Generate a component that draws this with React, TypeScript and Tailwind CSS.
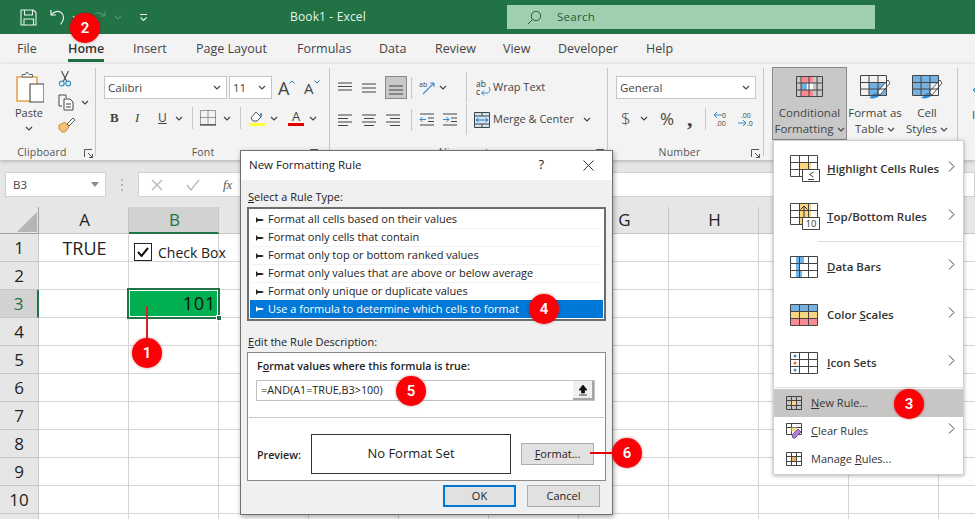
import React from "react";

const ui = "font-['Open_Sans','Noto_Sans',sans-serif]";

function Chev({ c = "#444", className = "" }: { c?: string; className?: string }) {
  return (
    <svg width="8" height="5" viewBox="0 0 8 5" className={className}>
      <path d="M1 1l3 3 3-3" fill="none" stroke={c} strokeWidth="1.2" />
    </svg>
  );
}

function Launcher() {
  return (
    <svg width="9" height="9" viewBox="0 0 9 9">
      <path d="M.5 8V.5H8M4 4l4.500 4.500M8.500 5v3.500H5" fill="none" stroke="#555" strokeWidth="1" />
    </svg>
  );
}

function Badge({ n, className }: { n: string; className: string }) {
  return (
    <div className={`absolute flex h-[30px] w-[30px] items-center justify-center rounded-full bg-[#fb0007] text-[15px] font-semibold text-white font-['Roboto',sans-serif] shadow-[0_0_3px_rgba(150,0,0,0.5)] ${className}`}>
      {n}
    </div>
  );
}

function RibbonSep({ className = "", tall = false }: { className?: string; tall?: boolean }) {
  return <div className={`${tall ? "h-[31px]" : "h-[22px]"} w-px bg-[#c8c8c8] ${className}`} />;
}

function GroupDivider() {
  return <div className="my-[4px] w-px shrink-0 bg-[#c6c6c6]" />;
}

function Lines({ ys, xs }: { ys: number[]; xs: [number, number][] }) {
  return (
    <svg width="16" height="16" viewBox="0 0 16 16">
      {ys.map((y, i) => (
        <path key={y} d={`M${xs[i][0]} ${y}H${xs[i][1]}`} stroke="#444" strokeWidth="1" />
      ))}
    </svg>
  );
}

function TitleBar() {
  return (
    <div className="flex h-[34px] items-center bg-[#217346] text-white">
      <div className="ml-[20px] flex w-[19px] items-center">
        <svg width="17" height="17" viewBox="0 0 17 17">
          <path d="M1 1h12.500L16 3.500V16H1zM4.500 1v5h8V1M4 16V10h9.500v6" fill="none" stroke="#e9f3ed" strokeWidth="1.1" />
        </svg>
      </div>
      <svg className="ml-[11px]" width="16" height="18" viewBox="0 0 16 18">
        <path d="M1 2v5h5M1.500 7C4 3.500 8 2.500 11 4.500c3.500 2.500 3.500 7-.5 12" fill="none" stroke="#e9f3ed" strokeWidth="1.2" />
      </svg>
      <Chev c="#d5e6dc" className="ml-[6px]" />
      <svg className="ml-[12px]" width="14" height="14" viewBox="0 0 14 14">
        <path d="M13 1v5H8M12.500 6C10 3 6 2 3 4" fill="none" stroke="#4f9470" strokeWidth="1.2" />
      </svg>
      <Chev c="#4f9470" className="ml-[8px]" />
      <svg className="ml-[17px]" width="9" height="9" viewBox="0 0 9 9">
        <path d="M1 1.500h7M1.500 4.500l3 3 3-3" fill="none" stroke="#e9f3ed" strokeWidth="1.1" />
      </svg>
      <div className={`ml-[142px] w-[219px] whitespace-nowrap text-[12px] tracking-[0.15px] text-[#e8f2ec] ${ui}`}>Book1  -  Excel</div>
      <div className="ml-[-2px] flex h-[24px] w-[368px] items-center bg-[#a0cfb0]">
        <svg className="ml-[20px]" width="15" height="15" viewBox="0 0 15 15">
          <circle cx="9" cy="6" r="4.700" fill="none" stroke="#1c5f3b" strokeWidth="1" />
          <path d="M5.500 9.500L1 14" stroke="#1c5f3b" strokeWidth="1" />
        </svg>
        <span className={`ml-[15px] text-[11.500px] tracking-[0.3px] text-[#1d5c3a] ${ui}`}>Search</span>
      </div>
    </div>
  );
}

const tabs: [string, string][] = [
  ["File", "w-[68px] pl-[17px]"],
  ["Home", "w-[65px]"],
  ["Insert", "w-[63px]"],
  ["Page Layout", "w-[101px]"],
  ["Formulas", "w-[82px]"],
  ["Data", "w-[56px]"],
  ["Review", "w-[68px]"],
  ["View", "w-[55px]"],
  ["Developer", "w-[88px]"],
  ["Help", "w-[50px]"],
];

function Tabs() {
  return (
    <div className={`flex h-[30px] items-center whitespace-nowrap bg-[#f3f3f3] text-[12.500px] text-[#444] ${ui}`}>
      {tabs.map(([t, c]) =>
        t === "Home" ? (
          <div key={t} className={`${c} flex h-full items-start`}>
            <span className="relative mt-[6px] font-semibold text-[#333]">
              {t}
              <span className="absolute bottom-[-3px] left-0 right-0 h-[3px] bg-[#1e6d43]" />
            </span>
          </div>
        ) : (
          <div key={t} className={c}>{t}</div>
        )
      )}
    </div>
  );
}

function GroupLabel({ text, w }: { text: string; w: string }) {
  return (
    <div className="mt-auto flex h-[14px] items-center">
      <div className={`${w} text-center text-[10.500px] tracking-[0.2px] text-[#555]`}>{text}</div>
      <Launcher />
    </div>
  );
}

function Clipboard() {
  return (
    <div className="flex h-full w-[95px] shrink-0 flex-col">
      <div className="flex">
        <div className="flex w-[58px] flex-col items-center pt-[7px]">
          <svg width="30" height="32" viewBox="0 0 30 32">
            <path d="M3 6h20v24H3z" fill="#fff" stroke="#e5a54c" strokeWidth="1.600" />
            <path d="M8 6V3.500h3.500L13 1l2 2.500h3.500V6z" fill="#fff" stroke="#666" strokeWidth="1" />
            <path d="M16 13h14v18H16z" fill="#fff" stroke="#444" strokeWidth="1.100" />
          </svg>
          <div className="mt-[3px] text-[11px] leading-[14px] text-[#444]">Paste</div>
          <Chev className="mt-[6px]" />
        </div>
        <div className="flex flex-col pt-[6px]">
          <svg width="14" height="17" viewBox="0 0 14 17">
            <path d="M3.500 1l5 10M10.500 1l-5 10" stroke="#444" strokeWidth="1.100" fill="none" />
            <circle cx="3.800" cy="13.500" r="2.400" fill="none" stroke="#3a8dc8" strokeWidth="1.200" />
            <circle cx="10.200" cy="13.500" r="2.400" fill="none" stroke="#3a8dc8" strokeWidth="1.200" />
          </svg>
          <div className="mt-[7px] flex items-center">
            <svg width="17" height="17" viewBox="0 0 17 17">
              <path d="M1 1h7v3M4 12H1V1M6 5h6l3 3v8H6zM8 10h5M8 13h5" fill="#fff" stroke="#444" strokeWidth="1" />
            </svg>
            <Chev className="ml-[6px]" />
          </div>
          <svg className="mt-[6px]" width="18" height="16" viewBox="0 0 18 16">
            <path d="M1 8l6-3 4 5-4 5H4L1 12z" fill="#f3c27a" stroke="#d98a2b" strokeWidth="1" />
            <path d="M9 7l6-6 2 2-6 6z" fill="#fff" stroke="#555" strokeWidth="1" />
          </svg>
        </div>
      </div>
      <GroupLabel text="Clipboard" w="w-[84px]" />
    </div>
  );
}

function Select({ text, w, pad = "pl-[5px]" }: { text: string; w: string; pad?: string }) {
  return (
    <div className={`flex h-[23px] shrink-0 items-center justify-between border border-[#c6c6c6] bg-white pr-[5px] ${pad} ${w}`}>
      <span className="text-[11.500px] text-[#444]">{text}</span>
      <Chev />
    </div>
  );
}

function FontGroup() {
  return (
    <div className="flex h-full w-[233px] shrink-0 flex-col pt-[12px]">
      <div className="flex items-center pl-[8px]">
        <Select text="Calibri" w="w-[123px]" pad="pl-[3px]" />
        <div className="w-[2px]" />
        <Select text="11" w="w-[43px]" pad="pl-[3px]" />
        <div className="ml-[6px] flex w-[26px] items-start text-[#444]">
          <span className="text-[18px] leading-[20px]">A</span>
          <svg className="mt-[2px]" width="6" height="4" viewBox="0 0 6 4"><path d="M.5 3.500L3 1l2.500 2.500" fill="none" stroke="#2a7ab8" /></svg>
        </div>
        <div className="flex w-[20px] items-start text-[#444]">
          <span className="text-[15px] leading-[20px]">A</span>
          <svg className="mt-[2px]" width="6" height="4" viewBox="0 0 6 4"><path d="M.5.500L3 3 5.500.5" fill="none" stroke="#2a7ab8" /></svg>
        </div>
      </div>
      <div className="mt-[7px] flex h-[24px] items-center text-[#444]">
        <span className="ml-[14px] w-[25px] font-['Liberation_Serif',serif] text-[13px] font-bold">B</span>
        <span className="w-[23px] font-['Liberation_Serif',serif] text-[13px] italic">I</span>
        <span className="w-[15px] text-[12px] underline">U</span>
        <Chev className="ml-[2px]" />
        <RibbonSep className="ml-[9px]" />
        <svg className="ml-[7px]" width="16" height="16" viewBox="0 0 16 16">
          <path d="M.5.500h15v14H.5z M.5 7.500h15 M8 .500v14" fill="none" stroke="#444" strokeDasharray="1 1" />
          <path d="M0 15h16" stroke="#222" strokeWidth="1" />
        </svg>
        <Chev className="ml-[7px]" />
        <RibbonSep className="ml-[9px]" />
        <svg className="ml-[7px]" width="17" height="17" viewBox="0 0 17 17">
          <path d="M3 8l5-6 5 5-4 4H5z" fill="#fff" stroke="#555" />
          <path d="M13 3v4" stroke="#2a7ab8" strokeWidth="1.500" />
          <path d="M1 13h16v3H1z" fill="#ffff33" />
        </svg>
        <Chev className="ml-[5px]" />
        <div className="ml-[10px] flex w-[16px] flex-col items-center">
          <span className="text-[13px] leading-[13px]">A</span>
          <span className="h-[3px] w-[16px] bg-[#e00000]" />
        </div>
        <Chev className="ml-[5px]" />
      </div>
      <GroupLabel text="Font" w="w-[214px]" />
    </div>
  );
}

function AlignGroup() {
  const l5: [number, number][] = [[1, 15], [1, 15], [1, 15]];
  return (
    <div className="flex h-full w-[277px] shrink-0 flex-col pt-[12px]">
      <div className="flex h-[23px] items-center pl-[7px]">
        <div className="w-[24px]"><Lines ys={[3, 6.500, 10]} xs={l5} /></div>
        <div className="w-[24px]"><Lines ys={[4, 8, 12]} xs={l5} /></div>
        <div className="flex h-[23px] w-[22px] items-center justify-center border border-[#8a8a8a] bg-[#c8c8c8]"><Lines ys={[6, 10, 14]} xs={l5} /></div>
        <RibbonSep className="ml-[4px]" />
        <svg className="ml-[7px]" width="17" height="16" viewBox="0 0 17 16">
          <path d="M4 14L15 3M15 3h-4M15 3v4" fill="none" stroke="#3a8dc8" strokeWidth="1.100" />
          <text x="0" y="7" fontSize="7" fill="#444">ab</text>
        </svg>
        <Chev className="ml-[3px]" />
        <RibbonSep tall className="ml-[19px]" />
        <svg className="ml-[9px]" width="15" height="17" viewBox="0 0 15 17">
          <text x="0" y="8" fontSize="8.500" fill="#333">ab</text>
          <text x="0" y="16" fontSize="8.500" fill="#333">c</text>
          <path d="M13 8c2 4 0 6-2 6H6M8 11.500L5.500 14 8 16.500" fill="none" stroke="#2a8ad0" strokeWidth="1" />
        </svg>
        <span className="ml-[2px] text-[11px] text-[#444]">Wrap Text</span>
      </div>
      <div className="mt-[9px] flex h-[23px] items-center pl-[7px]">
        <div className="w-[24px]"><Lines ys={[3, 6.500, 10, 13.500]} xs={[[1, 15], [1, 11], [1, 15], [1, 11]]} /></div>
        <div className="w-[24px]"><Lines ys={[3, 6.500, 10, 13.500]} xs={[[1, 15], [3, 13], [1, 15], [3, 13]]} /></div>
        <div className="w-[22px]"><Lines ys={[3, 6.500, 10, 13.500]} xs={[[1, 15], [5, 15], [1, 15], [5, 15]]} /></div>
        <RibbonSep className="ml-[4px]" />
        <svg className="ml-[7px]" width="16" height="13" viewBox="0 0 16 13">
          <path d="M1 1h14M9 5h6M9 8.500h6M1 12h14" stroke="#444" />
          <path d="M7 6.500H1M3.500 4L1 6.500 3.500 9" fill="none" stroke="#2a8ad0" />
        </svg>
        <svg className="ml-[7px]" width="16" height="13" viewBox="0 0 16 13">
          <path d="M1 1h14M9 5h6M9 8.500h6M1 12h14" stroke="#444" />
          <path d="M1 6.500h6M4.500 4L7 6.500 4.500 9" fill="none" stroke="#2a8ad0" />
        </svg>
        <RibbonSep tall className="ml-[8px]" />
        <svg className="ml-[7px]" width="16" height="16" viewBox="0 0 16 16">
          <path d="M.5.500h15v15H.5z" fill="#cfe6f7" stroke="#444" />
          <path d="M.5 4h15M.5 12h15M8 .5V4M8 12v3.500" stroke="#444" />
          <path d="M2 8h12M4.500 6L2 8l2.500 2M11.500 6L14 8l-2.500 2" fill="none" stroke="#2a7ab8" />
        </svg>
        <span className="ml-[3px] text-[11px] text-[#444]">Merge &amp; Center</span>
        <Chev className="ml-[9px]" />
      </div>
      <GroupLabel text="Alignment" w="w-[266px]" />
    </div>
  );
}

function NumberGroup() {
  return (
    <div className="flex h-full w-[155px] shrink-0 flex-col pt-[12px]">
      <div className="pl-[8px]"><Select text="General" w="w-[140px]" pad="pl-[3px]" /></div>
      <div className="mt-[8px] flex h-[23px] items-center pl-[13px] text-[#444]">
        <span className="w-[14px] text-[17px] font-light">$</span>
        <Chev className="ml-[5px]" />
        <span className="ml-[12px] w-[27px] text-[17px]">%</span>
        <span className="w-[10px] font-['Liberation_Serif',serif] text-[22px] font-bold leading-[14px]">,</span>
        <RibbonSep className="ml-[8px]" />
        <svg className="ml-[7px]" width="16" height="16" viewBox="0 0 16 16">
          <path d="M1 4h8M1 4l3-3M1 4l3 3" fill="none" stroke="#2a8ad0" />
          <text x="9" y="7" fontSize="7" fill="#444">0</text>
          <text x="3" y="15" fontSize="7" fill="#444">.00</text>
        </svg>
        <svg className="ml-[8px]" width="16" height="16" viewBox="0 0 16 16">
          <text x="4" y="7" fontSize="7" fill="#444">.00</text>
          <path d="M1 12h8M9 12l-3-3M9 12l-3 3" fill="none" stroke="#2a8ad0" />
          <text x="10" y="15" fontSize="7" fill="#444">.0</text>
        </svg>
      </div>
      <GroupLabel text="Number" w="w-[143px]" />
    </div>
  );
}

function TableGrid({ children }: { children?: React.ReactNode }) {
  return (
    <svg width="32" height="26" viewBox="0 0 32 26">
      {children}
      <path d="M1.500 1.500h26v20h-26zM1.500 8.500h26M1.500 15h26M10 1.500v20M19 1.500v20" fill="none" stroke="#444" strokeWidth="1" />
    </svg>
  );
}

function Brush() {
  return (
    <>
      <path d="M29 6L18 18l3 3L31 9z" fill="#fff" stroke="#555" strokeWidth="1" />
      <path d="M17 19c-3 0-4 3-7 5 4 1 9 0 11-3z" fill="#2f8ed6" />
    </>
  );
}

function StylesGroup() {
  return (
    <div className="flex h-full w-[193px] shrink-0 text-center text-[11.500px] leading-[16px] text-[#444]">
      <div className="ml-[8px] mt-[3px] flex h-[73px] w-[75px] flex-col items-center border border-[#8a8a8a] bg-[#c8c8c8] pt-[7px]">
        <svg width="30" height="24" viewBox="0 0 30 24">
          <path d="M6 1h12v7h-6v7h6v7H6z" fill="#fb8a92" />
          <path d="M6 8h6v7H6z" fill="#74b0e0" />
          <path d="M12 8h6v7h-6z" fill="#fff" />
          <path d="M1.500 1.500h26v20h-26zM1.500 8h26M1.500 15h26M6 1.500v20M14 1.500v20M22 1.500v20" fill="none" stroke="#444" />
        </svg>
        <div className="mt-[6px]">Conditional</div>
        <div className="flex items-center gap-[3px]">Formatting<Chev /></div>
      </div>
      <div className="ml-[1px] flex w-[54px] flex-col items-center pt-[10px]">
        <TableGrid><path d="M10 8.500h17v13H10z" fill="#74b0e0" /><Brush /></TableGrid>
        <div className="mt-[5px] whitespace-nowrap">Format as</div>
        <div className="flex items-center gap-[3px]">Table<Chev /></div>
      </div>
      <div className="flex w-[50px] flex-col items-center pt-[10px]">
        <TableGrid><path d="M1.500 1.500h26v8H19v12H1.500z" fill="#74b0e0" /><Brush /></TableGrid>
        <div className="mt-[5px]">Cell</div>
        <div className="flex items-center gap-[3px]">Styles<Chev /></div>
      </div>
    </div>
  );
}

function Ribbon() {
  return (
    <div className={`relative z-10 flex h-[96px] overflow-hidden bg-[#f3f3f3] shadow-[0_1px_4px_rgba(0,0,0,0.25)] ${ui}`}>
      <Clipboard />
      <GroupDivider />
      <FontGroup />
      <GroupDivider />
      <AlignGroup />
      <GroupDivider />
      <NumberGroup />
      <GroupDivider />
      <StylesGroup />
      <GroupDivider />
      <div className="ml-[14px] flex flex-col items-start pt-[13px]">
        <svg width="12" height="24" viewBox="0 0 12 24"><path d="M6 2h8v8H6zM7 13H1M3.500 10.500L1 13l2.500 2.500" fill="none" stroke="#2a8ad0" /></svg>
        <div className="mt-[5px] text-[11.500px] text-[#444]">I</div>
      </div>
    </div>
  );
}

function FormulaBar() {
  return (
    <div className={`flex h-[47px] items-center bg-[#e6e6e6] pt-[2px] ${ui}`}>
      <div className="ml-[5px] flex h-[25px] w-[101px] items-center justify-between border border-[#d2d2d2] bg-white pl-[7px] pr-[6px] text-[11.500px] text-[#444]">
        B3
        <svg width="8" height="5" viewBox="0 0 8 5"><path d="M0 0h8L4 5z" fill="#8a8a8a" /></svg>
      </div>
      <div className="ml-[15px] flex h-[12px] w-[2px] flex-col justify-between">
        <span className="h-[2px] bg-[#b5b5b5]" /><span className="h-[2px] bg-[#b5b5b5]" /><span className="h-[2px] bg-[#b5b5b5]" />
      </div>
      <div className="ml-[15px] flex h-[25px] flex-1 items-center border border-[#d2d2d2] bg-white text-[#bdbdbd]">
        <svg className="ml-[12px]" width="12" height="12" viewBox="0 0 12 12"><path d="M1 1l10 10M11 1L1 11" stroke="#bdbdbd" strokeWidth="1.500" /></svg>
        <svg className="ml-[23px]" width="14" height="12" viewBox="0 0 14 12"><path d="M1 6l4 5 8-10" fill="none" stroke="#bdbdbd" strokeWidth="1.500" /></svg>
        <span className="ml-[23px] font-['Liberation_Serif',serif] text-[13px] italic text-[#555]">fx</span>
      </div>
    </div>
  );
}

const cols = ["A", "B", "C", "D", "E", "F", "G", "H", "I", "J", "K"];
const rows = [1, 2, 3, 4, 5, 6, 7, 8, 9, 10, 11];

function Sheet() {
  return (
    <div className={`grid grid-cols-[39px_repeat(11,90px)] auto-rows-[28px] grid-rows-[27px] overflow-hidden text-[17px] text-[#222] ${ui}`}>
      <div className="flex items-end justify-end border-b border-r border-[#9f9f9f] bg-[#e6e6e6] p-[1px]">
        <svg width="20" height="20" viewBox="0 0 20 20"><path d="M20 0v20H0z" fill="#b5b5b5" /></svg>
      </div>
      {cols.map((c) => (
        <div key={c} className={c === "B"
          ? "flex items-center justify-center border-b-2 border-r border-b-[#217346] border-r-[#c6c6c6] bg-[#d2d2d2] pl-[2px] text-[#217346]"
          : "flex items-center justify-center border-b border-r border-[#c6c6c6] bg-[#e6e6e6] pl-[2px]"}>
          {c}
        </div>
      ))}
      {rows.map((r) => (
        <React.Fragment key={r}>
          <div className={r === 3
            ? "flex items-center justify-center border-b border-r-2 border-b-[#c6c6c6] border-r-[#217346] bg-[#d2d2d2] text-[#217346]"
            : "flex items-center justify-center border-b border-r border-[#c6c6c6] bg-[#e6e6e6]"}>
            {r < 11 ? r : ""}
          </div>
          {cols.map((c) => (
            <div key={c} className={`relative flex items-center border-b border-r border-[#d4d4d4] bg-white ${c === "B" && r === 1 ? "z-[2] overflow-visible" : ""}`}>
              {c === "A" && r === 1 && <span className="mt-[2px] w-full pl-[2px] text-center text-[18px]">TRUE</span>}
              {c === "B" && r === 1 && (
                <div className="mt-[9px] flex items-center whitespace-nowrap pl-[5px] text-[14px]">
                  <span className="flex h-[18px] w-[18px] shrink-0 items-center justify-center border border-[#222]">
                    <svg width="12" height="10" viewBox="0 0 12 10"><path d="M1 5l3.500 4L11 1" fill="none" stroke="#111" strokeWidth="2" /></svg>
                  </span>
                  <span className="ml-[6px]">Check Box</span>
                </div>
              )}
              {c === "B" && r === 3 && (
                <div className="absolute inset-[-2px_-2px_-2px_-2px] z-[1] flex items-center justify-end border-2 border-[#217346] bg-[#00b050] pr-[2px] text-[18px] tracking-[0.8px] text-[#111] shadow-[inset_0_0_0_1px_#ffffff]">
                  101
                  <span className="absolute bottom-[-4px] right-[-4px] h-[6px] w-[6px] border border-white bg-[#217346]" />
                </div>
              )}
            </div>
          ))}
        </React.Fragment>
      ))}
    </div>
  );
}

const ruleTypes = [
  "Format all cells based on their values",
  "Format only cells that contain",
  "Format only top or bottom ranked values",
  "Format only values that are above or below average",
  "Format only unique or duplicate values",
  "Use a formula to determine which cells to format",
];

function Bullet({ c }: { c: string }) {
  return (
    <svg className="mr-[4px]" width="8" height="6" viewBox="0 0 8 6"><path d="M0 0v6l2-2h4l2-1-2-1H2z" fill={c} /></svg>
  );
}

function Dialog() {
  return (
    <div className={`absolute left-[240px] top-[150px] z-20 flex h-[365px] w-[373px] flex-col border border-[#6f6f6f] bg-[#f0f0f0] text-[11px] text-[#222] shadow-[1px_2px_5px_rgba(0,0,0,0.35)] ${ui}`}>
      <div className="flex h-[29px] items-center bg-white pb-[1px] pl-[8px] text-[11.500px]">
        <span className="flex-1">New Formatting Rule</span>
        <span className="mr-[39px] text-[13px]">?</span>
        <svg className="mr-[18px]" width="11" height="11" viewBox="0 0 11 11"><path d="M.5.500l10 10M10.500.5l-10 10" stroke="#333" /></svg>
      </div>
      <div className="ml-[7px] mt-[9px] leading-[15px]"><u>S</u>elect a Rule Type:</div>
      <div className="ml-[6px] mt-[3px] h-[114px] w-[359px] border-2 border-[#6d6d6d] bg-white px-[1px] pt-[2px]">
        {ruleTypes.map((t, i) => (
          <div key={t} className={i === 5
            ? "-mt-[1px] flex h-[18px] items-center bg-[#0078d7] pl-[6px] text-white"
            : "ml-[2px] mr-[2px] flex h-[18px] items-center border-b border-[#f2f2f2] pl-[4px]"}>
            <Bullet c={i === 5 ? "#fff" : "#222"} />
            {t}
          </div>
        ))}
      </div>
      <div className="ml-[7px] mt-[13px] leading-[15px]"><u>E</u>dit the Rule Description:</div>
      <div className="ml-[6px] mt-[3px] h-[129px] w-[359px] border border-[#8a8a8a] bg-white">
        <div className="ml-[9px] mt-[6px] text-[10.700px] font-semibold leading-[15px]">F<u>o</u>rmat values where this formula is true:</div>
        <div className="ml-[8px] mt-[6px] flex h-[21px] w-[339px] items-center justify-between border border-[#c0c0c0] pl-[4px] text-[10.800px]">
          =AND(A1=TRUE,B3&gt;100)
          <div className="flex h-[19px] w-[21px] items-center justify-center border-b-2 border-r-2 border-[#a5a5a5] bg-[#f0f0f0]">
            <svg width="10" height="12" viewBox="0 0 10 12"><path d="M5 1L1 6h2.500v3h3V6H9zM1 11h8" fill="#111" stroke="#111" strokeWidth="0.800" /></svg>
          </div>
        </div>
        <div className="ml-[1px] mr-[1px] mt-[16px] h-px bg-[#c8c8c8]" />
        <div className="mt-[16px] flex items-start pl-[9px]">
          <span className="mt-[13px] w-[54px] text-[10.700px] font-semibold">Preview:</span>
          <div className="flex h-[40px] w-[200px] items-center justify-center border border-[#333] text-[13px]">No Format Set</div>
          <div className="ml-[10px] mt-[9px] flex h-[22px] w-[73px] items-center justify-center border border-[#adadad] bg-[#e1e1e1]"><span><u>F</u>ormat...</span></div>
        </div>
      </div>
      <div className="mt-[4px] flex justify-end pr-[12px]">
        <div className="flex h-[22px] w-[73px] items-center justify-center border-2 border-[#0078d7] bg-[#e1e1e1]">OK</div>
        <div className="ml-[11px] flex h-[22px] w-[73px] items-center justify-center border border-[#adadad] bg-[#e1e1e1]">Cancel</div>
      </div>
    </div>
  );
}

function MenuGrid({ children }: { children?: React.ReactNode }) {
  return (
    <svg width="30" height="22" viewBox="0 0 30 22" className="shrink-0">
      {children}
      <path d="M.5.500h27v21H.5zM.5 7.500h27M.5 14.500h27M9.500.5v21M18.500.5v21" fill="none" stroke="#444" />
    </svg>
  );
}

function Arrow() {
  return (
    <svg width="7" height="11" viewBox="0 0 7 11" className="ml-auto mb-[5px] mr-[8px] shrink-0">
      <path d="M1 .5l5 5-5 5" fill="none" stroke="#444" />
    </svg>
  );
}

function BigItem({ icon, text, u }: { icon: React.ReactNode; text: string; u: number }) {
  return (
    <div className="flex h-[48px] items-center pl-[16px]">
      <div className="w-[37px] shrink-0">{icon}</div>
      <span className="text-[11.500px] font-semibold text-[#333]">
        {u === 1 ? <><u>{text[0]}</u>{text.slice(1)}</> : <>{text.slice(0, u - 1)}<u>{text[u - 1]}</u>{text.slice(u)}</>}
      </span>
      <Arrow />
    </div>
  );
}

function SmallIcon({ children }: { children?: React.ReactNode }) {
  return (
    <svg width="16" height="14" viewBox="0 0 16 14" className="shrink-0">
      {children}
      <path d="M.5.500h15v13H.5zM.5 4.500h15M.5 9.500h15M5.500.5v13M10.500.5v13" fill="none" stroke="#444" />
    </svg>
  );
}

function Menu() {
  return (
    <div className={`absolute left-[773px] top-[140px] z-20 h-[335px] w-[191px] border border-[#d0d0d0] bg-white pt-[4px] shadow-[0_1px_4px_rgba(0,0,0,0.3)] ${ui}`}>
      <BigItem
        text="Highlight Cells Rules"
        u={1}
        icon={
          <svg width="31" height="28" viewBox="0 0 31 28">
            <path d="M9 7.500h12v7H9z" fill="#fbd67f" />
            <path d="M.5.500h27v21H.5zM.5 7.500h27M.5 14.500h27M9.500.5v21M18.500.5v21" fill="none" stroke="#444" />
            <path d="M12.500 14.500h17v12h-17z" fill="#fff" stroke="#444" />
            <path d="M23.500 17l-4 2.500 4 2.500M18 24.500h6" fill="none" stroke="#444" />
          </svg>
        }
      />
      <BigItem
        text="Top/Bottom Rules"
        u={1}
        icon={
          <svg width="31" height="28" viewBox="0 0 31 28">
            <path d="M9 .5h12v21H9z" fill="#fbd67f" />
            <path d="M.5.500h27v21H.5zM.5 7.500h27M.5 14.500h27M9.500.5v21M18.500.5v21" fill="none" stroke="#444" />
            <path d="M14 14V3M10.500 6.500L14 3l3.500 3.500" fill="none" stroke="#333" />
            <path d="M12.500 14.500h17v12h-17z" fill="#fff" stroke="#444" />
            <text x="15.500" y="24" fontSize="9.500" fill="#333">10</text>
          </svg>
        }
      />
      <div className="ml-[44px] h-px w-[146px] bg-[#dcdcdc]" />
      <div className="h-[1px]" />
      <BigItem
        text="Data Bars"
        u={1}
        icon={
          <MenuGrid>
            <path d="M6 .5h8v7H6zM6 7.500h4v7H6zM6 14.500h6v7H6z" fill="#6cb4ec" />
          </MenuGrid>
        }
      />
      <BigItem
        text="Color Scales"
        u={7}
        icon={
          <MenuGrid>
            <path d="M.5.500h27v7H.5z" fill="#74b0e0" />
            <path d="M.5 7.500h27v7H.5z" fill="#fbd67f" />
            <path d="M.5 14.500h27v7H.5z" fill="#fb8a92" />
          </MenuGrid>
        }
      />
      <BigItem
        text="Icon Sets"
        u={1}
        icon={
          <MenuGrid>
            <circle cx="5" cy="4" r="1.500" fill="#3a8dc8" />
            <circle cx="5" cy="11" r="1.500" fill="#e0702a" />
            <circle cx="5" cy="18" r="1.500" fill="#3a8dc8" />
          </MenuGrid>
        }
      />
      <div className="ml-[1px] h-px w-[188px] bg-[#dcdcdc]" />
      <div className="h-[1px]" />
      <div className="flex h-[28px] items-center bg-[#c8c6c4] pl-[12px] text-[11px] text-[#333]">
        <SmallIcon><path d="M5.500 4.500h5v5h-5z" fill="#fbd67f" /></SmallIcon>
        <span className="ml-[9px]"><u>N</u>ew Rule...</span>
      </div>
      <div className="flex h-[28px] items-center pl-[12px] text-[11px] text-[#333]">
        <svg width="16" height="16" viewBox="0 0 16 16" className="shrink-0">
          <path d="M.5.500h15v11H.5zM5.500.5v11M.5 4.500h15" fill="none" stroke="#444" />
          <path d="M5.500 4.500h5v4h-5z" fill="#fbd67f" />
          <path d="M6 12l6-6 3 3-6 6H7z" fill="#b57fd4" stroke="#7a4da0" />
        </svg>
        <span className="ml-[9px]"><u>C</u>lear Rules</span>
        <Arrow />
      </div>
      <div className="flex h-[28px] items-center pl-[12px] text-[11px] text-[#333]">
        <SmallIcon><path d="M5.500 4.500h5v5h-5z" fill="#f2b35a" /></SmallIcon>
        <span className="ml-[9px]">Manage <u>R</u>ules...</span>
      </div>
    </div>
  );
}

export default function App() {
  return (
    <div className="relative h-[519px] w-[975px] overflow-hidden bg-white">
      <TitleBar />
      <Tabs />
      <Ribbon />
      <FormulaBar />
      <Sheet />
      <Dialog />
      <Menu />
      <div className="absolute left-[146px] top-[306px] z-10 h-[34px] w-[2px] bg-[#d9202a]" />
      <div className="absolute left-[590px] top-[452px] z-30 h-[2px] w-[24px] bg-[#e00000]" />
      <Badge n="1" className="left-[132px] top-[338px] z-10" />
      <Badge n="2" className="left-[70px] top-[13px] z-30" />
      <Badge n="3" className="left-[894px] top-[389px] z-30" />
      <Badge n="4" className="left-[529px] top-[294px] z-30" />
      <Badge n="5" className="left-[396px] top-[376px] z-30" />
      <Badge n="6" className="left-[612px] top-[438px] z-30" />
    </div>
  );
}
